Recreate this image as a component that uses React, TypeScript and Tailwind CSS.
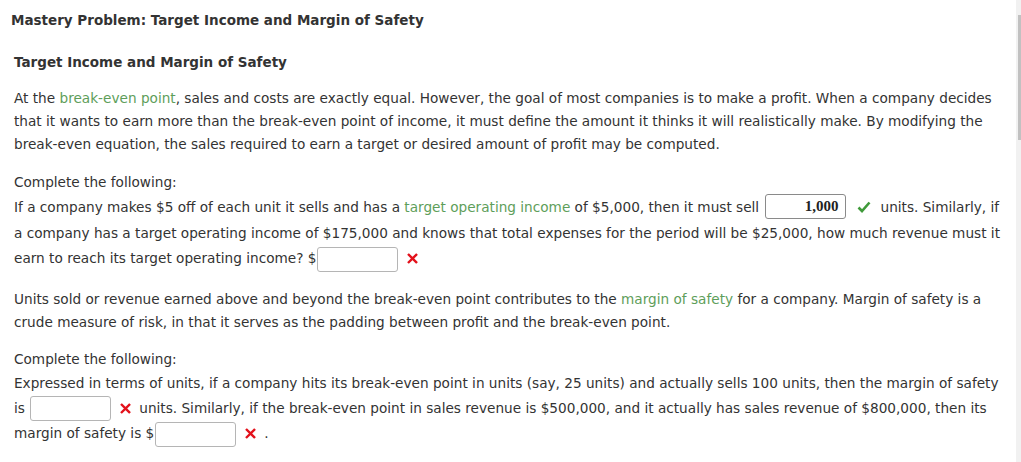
const GREEN = "text-[#5e9e5a]";

function Blank({ value }: { value?: string }) {
  return (
    <span
      className={`mx-[1px] inline-block h-[25px] w-[81px] rounded-[3px] border bg-white px-[6px] text-right align-middle font-['Liberation_Serif',serif] text-[15px] font-bold leading-[23px] text-[#222] ${
        value ? "mb-[2px] border-[#8a8a8a]" : "border-[#b5b5b5]"
      }`}
    >
      {value}
    </span>
  );
}

function Cross() {
  return (
    <svg viewBox="0 0 12 12" className="mx-[8px] inline-block h-[11px] w-[11px] align-[-1px]">
      <path d="M2 2 L10 10 M10 2 L2 10" stroke="#e3111b" strokeWidth="2.6" strokeLinecap="square" />
    </svg>
  );
}

function Check() {
  return (
    <svg viewBox="0 0 14 12" className="ml-[10px] mr-[10px] inline-block h-[12px] w-[14px] align-[-1px]">
      <path d="M1.5 6.5 L5 10 L12.5 1.5" stroke="#3f9a3a" strokeWidth="2.6" fill="none" />
    </svg>
  );
}

export default function App() {
  return (
    <div className="flex h-[462px] w-[1021px] bg-white font-['DejaVu_Sans',Verdana,sans-serif] text-[#333]">
      <div className="min-w-0 flex-1 overflow-hidden">
        <h1 className="px-[11px] pt-[10px] text-[13.5px] font-bold leading-[20px]">
          Mastery Problem: Target Income and Margin of Safety
        </h1>

        <div className="pl-[14px] pr-[13px] text-[13.65px] leading-[23px]">
          <h2 className="mt-[22px] text-[13.5px] font-bold leading-[20px]">Target Income and Margin of Safety</h2>

          <p className="mt-[15px]">
            At the <span className={GREEN}>break-even point</span>, sales and costs are exactly equal. However, the
            goal of most companies is to make a profit. When a company decides that it wants to earn more than the
            break-even point of income, it must define the amount it thinks it will realistically make. By modifying
            the break-even equation, the sales required to earn a target or desired amount of profit may be computed.
          </p>

          <p className="mt-[15px]">Complete the following:</p>
          <p className="leading-[25px]">
            If a company makes $5 off of each unit it sells and has a{" "}
            <span className={GREEN}>target operating income</span> of $5,000, then it must sell{" "}
            <Blank value="1,000" />
            <Check />
            units. Similarly, if a company has a target operating income of $175,000 and knows that total expenses for
            the period will be $25,000, how much revenue must it earn to reach its target operating income? $
            <Blank />
            <Cross />
          </p>

          <p className="mt-[16px]">
            Units sold or revenue earned above and beyond the break-even point contributes to the{" "}
            <span className={GREEN}>margin of safety</span> for a company. Margin of safety is a crude measure of
            risk, in that it serves as the padding between profit and the break-even point.
          </p>

          <p className="mt-[14px]">Complete the following:</p>
          <p className="leading-[25px]">
            Expressed in terms of units, if a company hits its break-even point in units (say, 25 units) and actually
            sells 100 units, then the margin of safety is <Blank />
            <Cross />
            units. Similarly, if the break-even point in sales revenue is $500,000, and it actually has sales revenue of
            $800,000, then its margin of safety is $
            <Blank />
            <Cross />.
          </p>
        </div>
      </div>

      <div className="flex w-[5px] flex-col bg-[#f1f1f1] pt-[15px]">
        <div className="ml-[2px] h-[125px] w-[3px] bg-[#c1c1c1]" />
      </div>
    </div>
  );
}
